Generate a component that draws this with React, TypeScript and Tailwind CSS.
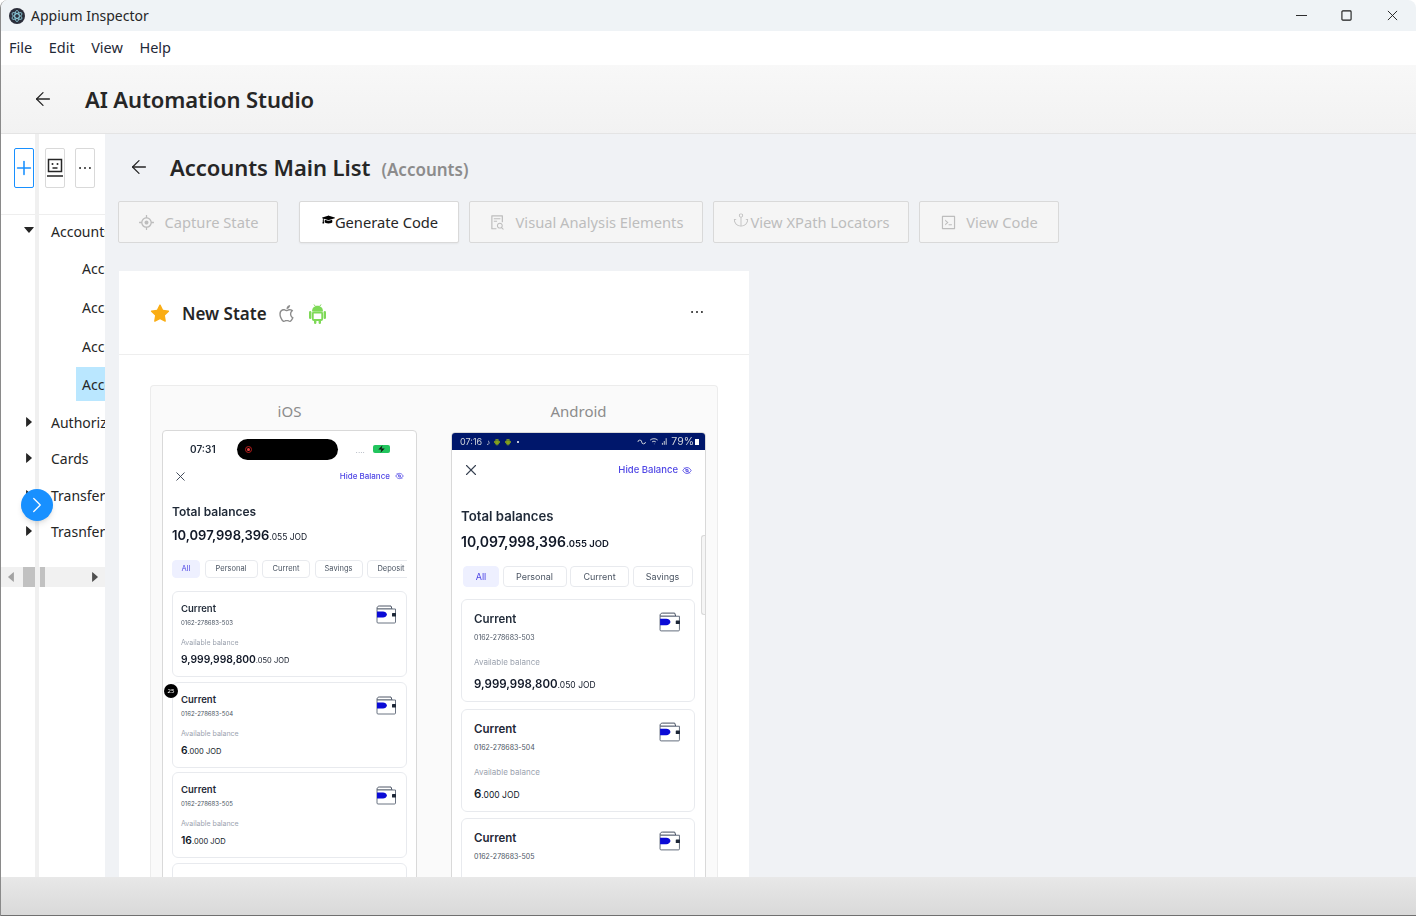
import { ArrowLeft, ChevronRight, Plus, X } from "lucide-react";
import {
  AiFillAndroid,
  AiFillCaretDown,
  AiFillCaretLeft,
  AiFillCaretRight,
  AiFillStar,
  AiOutlineAim,
  AiOutlineApple,
  AiOutlineCode,
  AiOutlineEllipsis,
  AiOutlineFileSearch,
} from "react-icons/ai";
import { FaGraduationCap } from "react-icons/fa";
import { PiAnchorSimpleLight } from "react-icons/pi";

const UI_FONT = "font-['Noto_Sans','Open_Sans',sans-serif]";
const PHONE_FONT = "font-['Inter','Lato',sans-serif]";

function AtomLogo() {
  return (
    <svg viewBox="0 0 16 16" className="h-4 w-4">
      <circle cx="8" cy="8" r="8" fill="#2b2e3a" />
      <g fill="none" stroke="#9feaf9" strokeWidth="0.7">
        <ellipse cx="8" cy="8" rx="5.6" ry="2.2" transform="rotate(30 8 8)" />
        <ellipse cx="8" cy="8" rx="5.6" ry="2.2" transform="rotate(90 8 8)" />
        <ellipse cx="8" cy="8" rx="5.6" ry="2.2" transform="rotate(150 8 8)" />
      </g>
    </svg>
  );
}

function RobotIcon() {
  return (
    <svg viewBox="0 0 18 20" className="h-[20px] w-[18px] shrink-0" fill="none" stroke="#262626" strokeWidth="1.5">
      <rect x="2.5" y="1.500" width="13" height="12" />
      <circle cx="6.5" cy="6" r="1" fill="#262626" stroke="none" />
      <circle cx="11.5" cy="6" r="1" fill="#262626" stroke="none" />
      <path d="M6.500 10h5M1 18h16" />
    </svg>
  );
}

function AndroidBadge() {
  return (
    <svg viewBox="0 0 17 21" className="ml-[12px] h-[21px] w-[17px] shrink-0">
      <path d="M5 1.500l1.500 2M12 1.500l-1.500 2" stroke="#7ed957" strokeWidth="1" />
      <path d="M3 8.500C3 5 5.500 2.800 8.500 2.800S14 5 14 8.500z" fill="#7ed957" />
      <rect x="3.800" y="9.500" width="9.400" height="7.500" rx="1" fill="#fff" stroke="#7ed957" strokeWidth="1.800" />
      <rect x="0" y="8" width="2.400" height="8" rx="1.200" fill="#7ed957" />
      <rect x="14.600" y="8" width="2.400" height="8" rx="1.200" fill="#7ed957" />
      <rect x="5" y="16.500" width="2.400" height="4.500" rx="1.200" fill="#7ed957" />
      <rect x="9.600" y="16.500" width="2.400" height="4.500" rx="1.200" fill="#7ed957" />
    </svg>
  );
}

function WalletIcon({ className }: { className: string }) {
  return (
    <svg viewBox="0 0 21 19" className={className}>
      <path d="M1 3.500C1 1.800 2 1 3.500 1H15l1 3H1z" fill="#fff" stroke="#3c4658" strokeWidth="0.9" />
      <path d="M1 4h18.500v13a1 1 0 0 1-1 1H2a1 1 0 0 1-1-1z" fill="#fff" stroke="#5a6475" strokeWidth="0.9" />
      <path d="M1 6.500h6c2 0 3.500 1.200 4 3-.5 1.800-2 3-4 3H1z" fill="#0b0bd6" />
      <rect x="16" y="8" width="4" height="3.500" rx="0.5" fill="#1d2738" />
    </svg>
  );
}

function EyeOff({ className }: { className: string }) {
  return (
    <svg viewBox="0 0 12 10" className={className} fill="none" stroke="#4f46e5" strokeWidth="1">
      <path d="M1 5c1.500-2.500 3-3.500 5-3.500S9.500 2.500 11 5c-1.500 2.500-3 3.500-5 3.500S2.500 7.500 1 5z" />
      <circle cx="6" cy="5" r="1.500" />
      <path d="M2.500 1.500l7 7" />
    </svg>
  );
}

function TreeCaret({ open, top }: { open?: boolean; top: string }) {
  const cls = `absolute left-[21px] h-[14px] w-[14px] text-[#262626] ${top}`;
  return open ? <AiFillCaretDown className={cls} /> : <AiFillCaretRight className={cls} />;
}

function ActionButton({ label, icon, w, active }: { label: string; icon: React.ReactNode; w: string; active?: boolean }) {
  return (
    <button
      className={`flex h-[42px] shrink-0 items-center justify-center rounded-[2px] border text-[14.700px] ${w} ${
        active
          ? "border-[#d9d9d9] bg-white text-[#262626] shadow-xs"
          : "border-[#d9d9d9] bg-[#f5f5f5] text-[#bdbdbd]"
      }`}
    >
      {icon}
      {label}
    </button>
  );
}

type PhoneStyle = {
  title: string;
  titleMb: string;
  amountBig: string;
  amountSmall: string;
  hide: string;
  eye: string;
  close: string;
  closeRow: string;
  tabsRow: string;
  tabs: string;
  tabWidths: string[];
  cards: string;
  card: string;
  cardName: string;
  acct: string;
  avail: string;
  cardAmount: string;
  cardSmall: string;
  wallet: string;
  body: string;
};

function BalanceCard({ s, acct, whole, frac }: { s: PhoneStyle; acct: string; whole: string; frac: string }) {
  return (
    <div className={`relative shrink-0 rounded-md border border-[#e8eaee] bg-white ${s.card}`}>
      <div className={`font-semibold text-[#1f2937] ${s.cardName}`}>Current</div>
      <div className={`text-[#4b5563] ${s.acct}`}>{acct}</div>
      <div className={`text-[#9ca3af] ${s.avail}`}>Available balance</div>
      <div className={`font-semibold text-[#111827] ${s.cardAmount}`}>
        {whole}
        <span className={`font-normal ${s.cardSmall}`}>{frac} JOD</span>
      </div>
      <WalletIcon className={`absolute ${s.wallet}`} />
    </div>
  );
}

function PhoneBody({ s, tabs }: { s: PhoneStyle; tabs: string[] }) {
  return (
    <div className={`${PHONE_FONT} ${s.body} flex flex-col blur-[0.3px]`}>
      <div className={`flex items-center justify-between ${s.closeRow}`}>
        <X className={`text-[#374151] ${s.close}`} strokeWidth={1.5} />
        <div className={`flex items-center font-medium text-[#4f46e5] ${s.hide}`}>
          Hide Balance
          <EyeOff className={s.eye} />
        </div>
      </div>
      <div className={`font-semibold text-[#1f2937] ${s.title}`}>Total balances</div>
      <div className={`font-semibold text-[#111827] ${s.amountBig} ${s.titleMb}`}>
        10,097,998,396
        <span className={s.amountSmall}>.055 JOD</span>
      </div>
      <div className={`flex overflow-hidden ${s.tabsRow}`}>
        {tabs.map((t, i) => (
          <div
            key={t}
            className={`flex shrink-0 items-center justify-center rounded-[4px] border ${s.tabs} ${s.tabWidths[i]} ${
              i === 0 ? "border-[#eef0ff] bg-[#eef0ff] text-[#4f46e5]" : "border-[#e8eaee] bg-white text-[#4b5563]"
            }`}
          >
            {t}
          </div>
        ))}
      </div>
      <div className={`flex flex-col ${s.cards}`}>
        <BalanceCard s={s} acct="0162-278683-503" whole="9,999,998,800" frac=".050" />
        <BalanceCard s={s} acct="0162-278683-504" whole="6" frac=".000" />
        <BalanceCard s={s} acct="0162-278683-505" whole="16" frac=".000" />
        <div className={`shrink-0 rounded-md border border-[#e8eaee] bg-white ${s.card}`} />
      </div>
    </div>
  );
}

const iosStyle: PhoneStyle = {
  body: "pl-[9px] pr-[9px]",
  closeRow: "h-[22px] pl-[1px]",
  close: "h-[15px] w-[15px]",
  hide: "text-[8px] gap-[5px] pr-[3px]",
  eye: "h-[8px] w-[9px]",
  title: "mt-[17px] text-[12px] leading-[16px]",
  amountBig: "mt-[5px] text-[13px] leading-[20px]",
  amountSmall: "text-[8.500px] font-normal",
  titleMb: "mb-[13px]",
  tabsRow: "gap-[4.500px]",
  tabs: "h-[18px] text-[7.500px]",
  tabWidths: ["w-[28px]", "w-[53px]", "w-[48px]", "w-[48px]", "w-[48px]"],
  cards: "mt-[13px] gap-[4.500px]",
  card: "h-[86px] pl-[8px] pt-[10px]",
  cardName: "text-[9.500px] leading-[14px]",
  acct: "text-[6px] leading-[10px] mt-[2px]",
  avail: "text-[7px] leading-[10px] mt-[10px]",
  cardAmount: "text-[10.300px] leading-[14px] mt-[4px]",
  cardSmall: "text-[7.500px]",
  wallet: "right-[9px] top-[13px] h-[19px] w-[21px]",
};

const androidStyle: PhoneStyle = {
  body: "pl-[9px] pr-[10px]",
  closeRow: "h-[40px] pl-[3px] -ml-[2px]",
  close: "h-[18px] w-[18px]",
  hide: "text-[9.500px] gap-[4px] pr-[3px]",
  eye: "h-[9px] w-[10px]",
  title: "mt-[16px] text-[13.200px] leading-[20px]",
  amountBig: "mt-[4px] text-[14px] leading-[24px]",
  amountSmall: "text-[9.500px]",
  titleMb: "mb-[10px]",
  tabsRow: "gap-[3.500px] pl-[2px]",
  tabs: "h-[21px] text-[9px]",
  tabWidths: ["w-[36px]", "w-[64px]", "w-[59px]", "w-[60px]"],
  cards: "mt-[12px] gap-[6.500px]",
  card: "h-[103px] pl-[12px] pt-[11px]",
  cardName: "text-[11.500px] leading-[16px]",
  acct: "text-[7px] leading-[10px] mt-[6px]",
  avail: "text-[8px] leading-[10px] mt-[14px]",
  cardAmount: "text-[11.500px] leading-[16px] mt-[9px]",
  cardSmall: "text-[8.500px]",
  wallet: "right-[13px] top-[12px] h-[20px] w-[22px]",
};

export default function App() {
  return (
    <div className={`${UI_FONT} flex h-[916px] w-[1416px] flex-col overflow-hidden rounded-t-lg border-l border-[#8a8a8a] bg-white text-[#262626]`}>
      {/* title bar */}
      <div className="flex h-[31px] shrink-0 items-center bg-[#eff3f6] pl-[8px]">
        <AtomLogo />
        <span className="ml-[6px] text-[14px]">Appium Inspector</span>
        <div className="ml-auto flex items-center pr-[18px]">
          <svg viewBox="0 0 12 12" className="mr-[34px] h-[11px] w-[11px]" stroke="#1a1a1a" strokeWidth="1">
            <path d="M0 6h12" />
          </svg>
          <svg viewBox="0 0 12 12" className="mr-[35px] h-[11px] w-[11px]" fill="none" stroke="#1a1a1a" strokeWidth="1.200">
            <rect x="1" y="1" width="10" height="10" rx="1" />
          </svg>
          <svg viewBox="0 0 12 12" className="h-[11px] w-[11px]" stroke="#1a1a1a" strokeWidth="1">
            <path d="M1 1l10 10M11 1L1 11" />
          </svg>
        </div>
      </div>

      {/* menu */}
      <div className="flex h-[34px] shrink-0 items-center gap-[16.500px] bg-white pb-[1px] pl-[8px] text-[14.500px] text-[#1f2937]">
        <span>File</span>
        <span>Edit</span>
        <span>View</span>
        <span>Help</span>
      </div>

      {/* page header */}
      <div className="flex h-[69px] shrink-0 items-center border-b border-[#e4e4e4] bg-gradient-to-b from-[#f8f8f8] to-[#f2f2f2] pl-[31px]">
        <ArrowLeft className="h-[22px] w-[22px]" strokeWidth={1.400} />
        <h1 className="ml-[31px] text-[22px] font-semibold tracking-[-0.1px]">AI Automation Studio</h1>
      </div>

      <div className="relative flex h-[743px] shrink-0 overflow-hidden bg-[#f0f2f5]">
        {/* side panel */}
        <aside className="relative flex h-full w-[104px] shrink-0 flex-col overflow-hidden bg-white">
          <div className="flex h-[81px] shrink-0 items-start border-b border-[#eeeeee] pt-[14px]">
            <div className="ml-[13px] flex h-[40px] w-[20px] items-center justify-center rounded-[2px] border border-[#1890ff] text-[#1890ff]">
              <Plus className="h-[22px] w-[22px] shrink-0" strokeWidth={1.700} />
            </div>
            <div className="ml-[11px] flex h-[40px] w-[20px] items-center justify-center rounded-[2px] border border-[#d9d9d9]">
              <RobotIcon />
            </div>
            <div className="ml-[10px] flex h-[40px] w-[20px] items-center justify-center rounded-[2px] border border-[#d9d9d9]">
              <AiOutlineEllipsis className="h-[18px] w-[18px] shrink-0" />
            </div>
          </div>

          <div className="relative flex-1 whitespace-nowrap text-[14px]">
            <TreeCaret open top="top-[8px]" />
            <TreeCaret top="top-[200px]" />
            <TreeCaret top="top-[236px]" />
            <TreeCaret top="top-[273px]" />
            <TreeCaret top="top-[309px]" />
            <div className="flex flex-col overflow-hidden pl-[50px]">
              <div className="flex h-[33px] items-center">Accounts</div>
              <div className="ml-[25px] flex h-[39px] items-center pl-[6px] pt-[1px]">Accounts</div>
              <div className="ml-[25px] flex h-[39px] items-center pl-[6px] pt-[2px]">Accounts</div>
              <div className="ml-[25px] flex h-[39px] items-center pl-[6px] pt-[2px]">Accounts</div>
              <div className="ml-[25px] mt-[2px] flex h-[34px] items-center bg-[#bae7ff] pl-[6px]">Accounts</div>
              <div className="mt-[3px] flex h-[36px] items-center">Authorization</div>
              <div className="flex h-[37px] items-center">Cards</div>
              <div className="flex h-[36px] items-center">Transfers</div>
              <div className="flex h-[36px] items-center">Trasnfers</div>
            </div>
            {/* horizontal scrollbar */}
            <div className="absolute left-0 right-0 top-[352px] flex h-[20px] items-center bg-[#f1f1f1]">
              <AiFillCaretLeft className="ml-[3px] h-[14px] w-[14px] text-[#a3a3a3]" />
              <div className="ml-[5px] h-[20px] w-[12px] bg-[#c1c1c1]" />
              <div className="ml-[5px] h-[20px] w-[5px] bg-[#c1c1c1]" />
              <AiFillCaretRight className="ml-auto mr-[3px] h-[14px] w-[14px] text-[#505050]" />
            </div>
          </div>
          {/* vertical splitter running through the panel */}
          <div className="absolute bottom-0 left-[34px] top-0 w-[4px] bg-[#f0f0f0]" />
        </aside>

        {/* floating expand button */}
        <div className="absolute left-[20px] top-[355px] flex h-[32px] w-[32px] items-center justify-center rounded-full bg-[#1890ff] shadow-md">
          <ChevronRight className="h-[26px] w-[26px] text-white" strokeWidth={1.200} />
        </div>

        {/* main */}
        <main className="min-w-0 flex-1 overflow-hidden pl-[13px]">
          <div className="flex h-[67px] items-center pb-[1px] pl-[10px]">
            <ArrowLeft className="h-[22px] w-[22px]" strokeWidth={1.400} />
            <h2 className="ml-[20px] text-[22px] font-semibold tracking-[-0.05px]">Accounts Main List</h2>
            <span className="ml-[11px] mt-[5px] text-[17px] font-semibold text-[#8c8c8c]">(Accounts)</span>
          </div>

          <div className="flex items-center">
            <ActionButton w="w-[160px]" label="Capture State" icon={<AiOutlineAim className="mr-[10px] h-[17px] w-[17px]" />} />
            <div className="w-[21px]" />
            <ActionButton active w="w-[160px]" label="Generate Code" icon={<FaGraduationCap className="mb-[5px] ml-[2px] h-[13px] w-[13px] text-black" />} />
            <div className="w-[10px]" />
            <ActionButton w="w-[234px]" label="Visual Analysis Elements" icon={<AiOutlineFileSearch className="mr-[10px] h-[17px] w-[17px]" />} />
            <div className="w-[10px]" />
            <ActionButton w="w-[196px]" label="View XPath Locators" icon={<PiAnchorSimpleLight className="mb-[4px] h-[18px] w-[18px]" />} />
            <div className="w-[10px]" />
            <ActionButton w="w-[140px]" label="View Code" icon={<AiOutlineCode className="mr-[9px] h-[17px] w-[17px]" />} />
          </div>

          <section className="ml-[1px] mt-[28px] w-[630px] bg-white">
            <div className="flex h-[84px] items-center border-b border-[#eeeeee] pl-[30px] pr-[43px] pt-[2px]">
              <AiFillStar className="h-[22px] w-[22px] text-[#faad14]" />
              <span className="ml-[11px] text-[17px] font-semibold">New State</span>
              <AiOutlineApple className="ml-[9px] h-[21px] w-[21px] text-[#8c8c8c]" />
              <AndroidBadge />
              <AiOutlineEllipsis className="mb-[4px] ml-auto h-[18px] w-[18px] text-[#1f1f1f]" />
            </div>

            <div className="pl-[31px] pr-[31px] pt-[30px]">
              <div className="flex h-[620px] rounded-t-sm border border-b-0 border-[#ececec] bg-[#fafafa]">
                <div className="ml-[11px] w-[255px]">
                  <div className="flex h-[44px] items-center justify-center pt-[6px] text-[15px] text-[#8c8c8c]">iOS</div>
                  <div className="relative h-[560px] overflow-hidden rounded-t-[4px] border border-[#d9d9d9] bg-white">
                    <div className={`${PHONE_FONT} flex h-[23px] items-start pt-[8px] blur-[0.3px]`}>
                      <span className="ml-[27px] mt-[3px] text-[10px] font-semibold text-[#1f2937]">07:31</span>
                      <div className="ml-[21px] flex h-[21px] w-[101px] items-center rounded-full bg-black pl-[8px]">
                        <div className="flex h-[7px] w-[7px] items-center justify-center rounded-full border border-[#b91c1c]">
                          <div className="h-[3px] w-[3px] rounded-full bg-[#ef4444]" />
                        </div>
                      </div>
                      <span className="ml-[18px] mt-[5px] text-[8px] leading-[12px] text-[#9ca3af]">....</span>
                      <div className="ml-[8px] mt-[6px] h-[8px] w-[17px] rounded-[2px] bg-[#22c55e]">
                        <svg viewBox="0 0 16 7" className="h-[8px] w-[17px]">
                          <path d="M9 0L5 4h3l-1 3 4-4H8z" fill="#111" />
                        </svg>
                      </div>
                    </div>
                    <div className="pt-[11px]">
                      <PhoneBody s={iosStyle} tabs={["All", "Personal", "Current", "Savings", "Deposit"]} />
                    </div>
                    <div className="absolute left-[1px] top-[253px] flex h-[14px] w-[14px] items-center justify-center rounded-full bg-black text-[6px] text-white">25</div>
                  </div>
                </div>

                <div className="ml-[34px] w-[255px]">
                  <div className="flex h-[46px] items-center justify-center pt-[4px] text-[15px] text-[#8c8c8c]">Android</div>
                  <div className="relative h-[560px] overflow-hidden rounded-t-[4px] border border-[#d9d9d9] bg-white">
                    <div className={`${PHONE_FONT} flex h-[17px] items-center bg-[#00176b] pl-[8px] pr-[6px] text-[9px] text-[#d1d5db] blur-[0.3px]`}>
                      <span>07:16</span>
                      <span className="ml-[4px] text-[8px]">♪</span>
                      <AiFillAndroid className="ml-[3px] h-[8px] w-[8px] text-[#84a11c]" />
                      <AiFillAndroid className="ml-[3px] h-[8px] w-[8px] text-[#84a11c]" />
                      <span className="ml-[5px] h-[2px] w-[2px] rounded-full bg-white" />
                      <svg viewBox="0 0 34 9" className="ml-auto h-[9px] w-[32px]" fill="none" stroke="#d1d5db" strokeWidth="1">
                        <path d="M1 5a2 2 0 0 1 4 0 2 2 0 0 0 4 0" />
                        <path d="M14 3c2-2 6-2 8 0M16 5c1-1 3-1 4 0M18 7h.500" />
                        <path d="M27 8V6M29 8V4M31 8V1" />
                      </svg>
                      <span className="ml-[2px] text-[10.500px]">79%</span>
                      <span className="ml-[1px] h-[6px] w-[4px] bg-white" />
                    </div>
                    <PhoneBody s={androidStyle} tabs={["All", "Personal", "Current", "Savings"]} />
                    <div className="absolute right-0 top-[102px] h-[80px] w-[4px] rounded-l-[3px] border border-r-0 border-[#d9d9d9] bg-[#f5f5f5]" />
                  </div>
                </div>
              </div>
            </div>
          </section>
        </main>
      </div>

      {/* footer */}
      <div className="h-[39px] shrink-0 border-b border-[#707070] bg-gradient-to-b from-[#e8e8e8] to-[#d9d9d9]" />
    </div>
  );
}
